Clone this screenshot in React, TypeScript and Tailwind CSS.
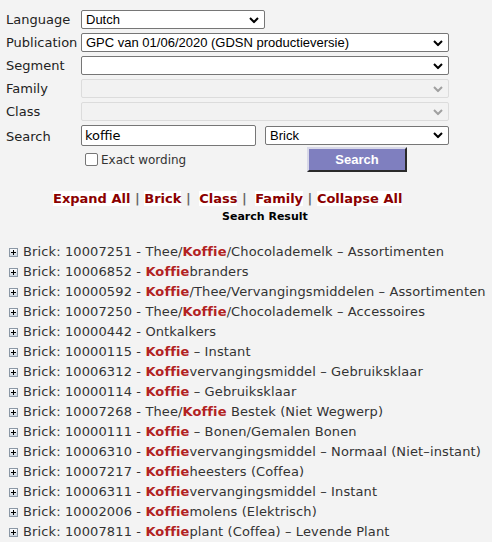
import * as React from "react";

// one search hit: text before / highlighted word / text after
type Hit = { id: string; pre: string; hit: string; post: string };

const hits: Hit[] = [
  { id: "10007251", pre: "Thee/", hit: "Koffie", post: "/Chocolademelk – Assortimenten" },
  { id: "10006852", pre: "", hit: "Koffie", post: "branders" },
  { id: "10000592", pre: "", hit: "Koffie", post: "/Thee/Vervangingsmiddelen – Assortimenten" },
  { id: "10007250", pre: "Thee/", hit: "Koffie", post: "/Chocolademelk – Accessoires" },
  { id: "10000442", pre: "Ontkalkers", hit: "", post: "" },
  { id: "10000115", pre: "", hit: "Koffie", post: " – Instant" },
  { id: "10006312", pre: "", hit: "Koffie", post: "vervangingsmiddel – Gebruiksklaar" },
  { id: "10000114", pre: "", hit: "Koffie", post: " – Gebruiksklaar" },
  { id: "10007268", pre: "Thee/", hit: "Koffie", post: " Bestek (Niet Wegwerp)" },
  { id: "10000111", pre: "", hit: "Koffie", post: " – Bonen/Gemalen Bonen" },
  { id: "10006310", pre: "", hit: "Koffie", post: "vervangingsmiddel – Normaal (Niet–instant)" },
  { id: "10007217", pre: "", hit: "Koffie", post: "heesters (Coffea)" },
  { id: "10006311", pre: "", hit: "Koffie", post: "vervangingsmiddel – Instant" },
  { id: "10002006", pre: "", hit: "Koffie", post: "molens (Elektrisch)" },
  { id: "10007811", pre: "", hit: "Koffie", post: "plant (Coffea) – Levende Plant" },
];

function Chevron({ disabled }: { disabled?: boolean }) {
  return (
    <svg
      width="10"
      height="7"
      viewBox="0 0 10 7"
      className="pointer-events-none absolute right-[6px] top-1/2 -translate-y-1/2"
    >
      <path
        d="M1 1.5 L5 5.5 L9 1.5"
        fill="none"
        stroke={disabled ? "#a0a0a0" : "#000"}
        strokeWidth="2"
      />
    </svg>
  );
}

function Select({
  value,
  width,
  disabled,
}: {
  value: string;
  width: string;
  disabled?: boolean;
}) {
  return (
    <div className={`relative ${width}`}>
      <div
        className={
          disabled
            ? "h-[19px] rounded-[2px] border border-[#dcdcdc] bg-[#f2f2f2]"
            : "h-[19px] rounded-[2px] border border-[#767676] bg-white pl-[4px] text-[13px] leading-[17px] text-black [font-family:'Liberation_Sans',Arial,sans-serif]"
        }
      >
        {value}
      </div>
      <Chevron disabled={disabled} />
    </div>
  );
}

function PlusBox() {
  return (
    <svg width="9" height="9" viewBox="0 0 9 9" className="shrink-0">
      <defs>
        <linearGradient id="pb" x1="0" y1="0" x2="0" y2="1">
          <stop offset="0" stopColor="#ffffff" />
          <stop offset="1" stopColor="#c9d3dd" />
        </linearGradient>
      </defs>
      <rect x="0.5" y="0.5" width="8" height="8" fill="url(#pb)" stroke="#8a97a5" />
      <path d="M2 4.5 H7 M4.5 2 V7" stroke="#000" strokeWidth="1" />
    </svg>
  );
}

function Label({ children, low }: { children: React.ReactNode; low?: boolean }) {
  return (
    <div className={`w-[75px] shrink-0 text-[13px] text-[#222] ${low ? "mt-[4px]" : ""}`}>
      {children}
    </div>
  );
}

export default function App() {
  const link = "bg-white text-[#8b0000]";
  return (
    <div className="min-h-[542px] bg-[#f3f3f3] pt-[8px] [font-family:'DejaVu_Sans',Verdana,sans-serif]">
      <div className="flex flex-col pl-[6px]">
        <div className="flex h-[23px] items-center">
          <Label>Language</Label>
          <Select value="Dutch" width="w-[184px]" />
        </div>
        <div className="flex h-[23px] items-center">
          <Label>Publication</Label>
          <Select value="GPC van 01/06/2020 (GDSN productieversie)" width="w-[368px]" />
        </div>
        <div className="flex h-[23px] items-center">
          <Label>Segment</Label>
          <Select value="" width="w-[368px]" />
        </div>
        <div className="flex h-[23px] items-center">
          <Label>Family</Label>
          <Select value="" width="w-[368px]" disabled />
        </div>
        <div className="flex h-[23px] items-center">
          <Label>Class</Label>
          <Select value="" width="w-[368px]" disabled />
        </div>
        <div className="flex h-[24px] items-center">
          <Label low>Search</Label>
          <div className="h-[21px] w-[175px] rounded-[2px] border border-[#767676] bg-white pl-[3px] text-[13px] leading-[19px] text-black">
            koffie
          </div>
          <div className="ml-[9px]">
            <Select value="Brick" width="w-[184px]" />
          </div>
        </div>
        <div className="flex h-[25px] items-center">
          <div className="flex w-[301px] items-center pl-[79px]">
            <span className="h-[13px] w-[13px] rounded-[2px] border border-[#767676] bg-white" />
            <span className="ml-[3px] text-[12px] text-[#333]">Exact wording</span>
          </div>
          <div className="flex h-[25px] w-[100px] items-center justify-center border-[2px] border-t-[#d8d8e8] border-l-[#d8d8e8] border-r-[#2a2a2a] border-b-[#2a2a2a] bg-[#7f7fbf] text-[13px] font-bold text-white [font-family:'Liberation_Sans',Arial,sans-serif]">
            Search
          </div>
        </div>
      </div>

      <div className="mt-[19px] pl-[53px] text-[13px] font-bold leading-[16px] text-[#666]">
        <span className={link}>Expand All</span> | <span className={link}>Brick</span> |{" "}
        {" "}<span className={`${link} ml-[4px]`}>Class</span> |{" "}
        <span className={`${link} ml-[4px]`}>Family</span> | <span className={link}>Collapse All</span>
      </div>
      <div className="mt-[3px] pl-[222px] text-[11px] font-bold leading-[14px] text-black">
        Search Result
      </div>

      <div className="mt-[18px] flex flex-col">
        {hits.map((h) => (
          <div
            key={h.id}
            className="flex h-[20px] items-center pl-[9px] text-[13px] tracking-[0.12px] text-[#333]"
          >
            <PlusBox />
            <span className="ml-[5px] whitespace-nowrap">
              Brick: {h.id} - {h.pre}
              {h.hit && <b className="text-[#b22222]">{h.hit}</b>}
              {h.post}
            </span>
          </div>
        ))}
      </div>
    </div>
  );
}
